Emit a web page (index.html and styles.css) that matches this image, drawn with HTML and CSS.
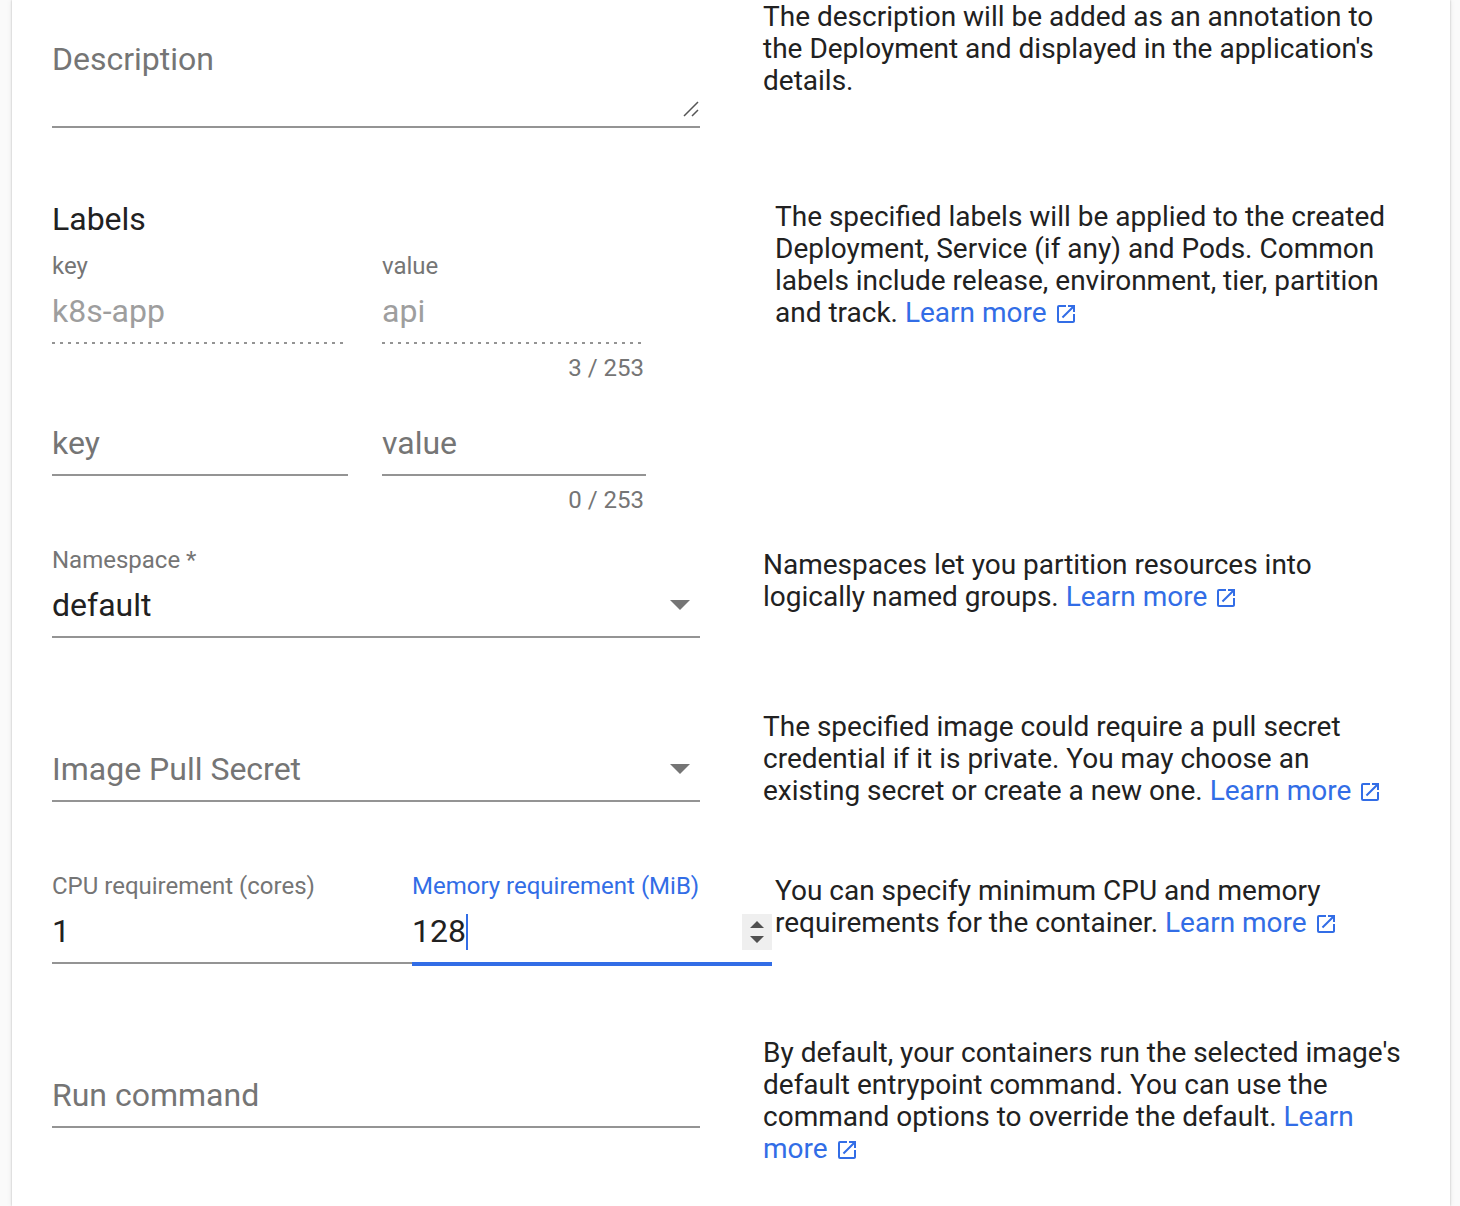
FILE: index.html
```html
<!DOCTYPE html>
<html lang="en">
<head>
<meta charset="utf-8">
<meta name="viewport" content="width=device-width, initial-scale=1">
<title>Create from form</title>
<link rel="stylesheet" href="styles.css">
</head>
<body>
<svg class="sprite" aria-hidden="true">
  <symbol id="open-in-new" viewBox="0 0 24 24"><path d="M19 19H5V5h7V3H5a2 2 0 0 0-2 2v14a2 2 0 0 0 2 2h14c1.100 0 2-.9 2-2v-7h-2v7zM14 3v2h3.590l-9.830 9.830 1.410 1.410L19 6.410V10h2V3h-7z"/></symbol>
</svg>
<main class="card">
  <form class="form">
    <section class="row">
      <div class="field field-area">
        <label class="resting" for="description">Description</label>
        <textarea class="control" id="description"></textarea>
        <svg class="grip" viewBox="0 0 16 16" aria-hidden="true"><path d="M1 15 15 1M9 15l6-6"/></svg>
      </div>
      <p class="help">The description will be added as an annotation to the Deployment and displayed in the application's details.</p>
    </section>

    <section class="row">
      <div class="labels">
        <h2 class="heading">Labels</h2>
        <div class="pair">
          <div class="field">
            <label for="key-0">key</label>
            <input class="control" id="key-0" value="k8s-app" disabled>
          </div>
          <div class="field">
            <label for="value-0">value</label>
            <input class="control" id="value-0" value="api" disabled>
            <span class="hint">3 / 253</span>
          </div>
        </div>
        <div class="pair">
          <div class="field">
            <label class="resting" for="key-1">key</label>
            <input class="control" id="key-1">
          </div>
          <div class="field">
            <label class="resting" for="value-1">value</label>
            <input class="control" id="value-1">
            <span class="hint">0 / 253</span>
          </div>
        </div>
      </div>
      <p class="help help-inset">The specified labels will be applied to the created Deployment, Service (if any) and Pods. Common labels include release, environment, tier, partition and track. <a href="#labels">Learn more <svg class="icon" aria-hidden="true"><use href="#open-in-new"/></svg></a></p>
    </section>

    <section class="row">
      <div class="field">
        <label for="namespace">Namespace *</label>
        <select class="control" id="namespace" required><option>default</option></select>
        <svg class="arrow" viewBox="0 0 20 10" aria-hidden="true"><path d="M0 0h20L10 10z"/></svg>
      </div>
      <p class="help">Namespaces let you partition resources into logically named groups. <a href="#namespaces">Learn more <svg class="icon" aria-hidden="true"><use href="#open-in-new"/></svg></a></p>
    </section>

    <section class="row">
      <div class="field">
        <label class="resting" for="secret">Image Pull Secret</label>
        <select class="control" id="secret"><option value=""></option></select>
        <svg class="arrow" viewBox="0 0 20 10" aria-hidden="true"><path d="M0 0h20L10 10z"/></svg>
      </div>
      <p class="help">The specified image could require a pull secret credential if it is private. You may choose an existing secret or create a new one. <a href="#secrets">Learn more <svg class="icon" aria-hidden="true"><use href="#open-in-new"/></svg></a></p>
    </section>

    <section class="row row-wide">
      <div class="resources">
        <div class="field">
          <label for="cpu">CPU requirement (cores)</label>
          <input class="control" id="cpu" type="number" value="1">
        </div>
        <div class="field active">
          <label for="memory">Memory requirement (MiB)</label>
          <input class="control" id="memory" type="number" value="128">
          <span class="caret"></span>
          <svg class="spinner" viewBox="0 0 30 36" aria-hidden="true"><path d="M8 14 15 7l7 7zM8 22l7 7 7-7z"/></svg>
        </div>
      </div>
      <p class="help">You can specify minimum CPU and memory requirements for the container. <a href="#resources">Learn more <svg class="icon" aria-hidden="true"><use href="#open-in-new"/></svg></a></p>
    </section>

    <section class="row">
      <div class="field">
        <label class="resting" for="command">Run command</label>
        <input class="control" id="command">
      </div>
      <p class="help">By default, your containers run the selected image's default entrypoint command. You can use the command options to override the default. <a href="#command">Learn more <svg class="icon" aria-hidden="true"><use href="#open-in-new"/></svg></a></p>
    </section>
  </form>
</main>
</body>
</html>
```
FILE: styles.css
```css
* {
  box-sizing: border-box;
}

body {
  margin: 0;
  background: #fafafa;
  color: #212121;
  font-family: Roboto, sans-serif;
  font-size: 28px;
  line-height: 32px;
}

.sprite {
  display: none;
}

.card {
  min-height: 100vh;
  margin: 0 10px 0 12px;
  padding: 0 40px;
  background: #fff;
  box-shadow: 0 0 2px rgba(0, 0, 0, 0.24), 0 0 6px rgba(0, 0, 0, 0.08);
}

.form {
  display: flex;
  flex-direction: column;
  gap: 32px;
}

.row {
  display: grid;
  grid-template-columns: minmax(0, 648fr) minmax(0, 647fr);
  column-gap: 63px;
  align-items: start;
}

.row:nth-child(odd) {
  padding-bottom: 2px;
}

.row-wide {
  grid-template-columns: minmax(0, 720fr) minmax(0, 635fr);
  column-gap: 3px;
}

.help {
  margin: 0;
  padding-top: 1px;
}

.row:nth-child(odd):not(:first-child) .help {
  padding-top: 3px;
}

.help-inset {
  padding-left: 12px;
}

a {
  color: #326de6;
  text-decoration: none;
}

.icon {
  width: 24px;
  height: 24px;
  fill: currentColor;
  vertical-align: -4px;
}

/* Field: floating label, control, hint */
.field {
  display: grid;
  grid-template-rows: 28px auto 24px;
  grid-template-columns: minmax(0, 1fr);
  row-gap: 14px;
}

.field > * {
  grid-column: 1;
  grid-row: 2;
}

.field > label {
  grid-row: 1;
  color: #757575;
  font-size: 24px;
  line-height: 28px;
}

.field > .resting {
  grid-row: 2;
  font-size: 32px;
  line-height: 34px;
  z-index: 1;
  pointer-events: none;
}

.control {
  display: block;
  width: 100%;
  height: 50px;
  margin: 0;
  padding: 0 0 14px;
  border: 0;
  border-bottom: 2px solid #949494;
  border-radius: 0;
  outline: 0;
  background: transparent;
  color: #212121;
  font: 32px/34px Roboto, sans-serif;
  appearance: none;
}

.control[type="number"] {
  appearance: textfield;
}

.control:disabled {
  border-bottom-color: transparent;
  background: repeating-linear-gradient(to right, #949494 0 3px, transparent 3px 8px) left bottom / 100% 2px no-repeat border-box;
  color: #9e9e9e;
  opacity: 1;
}

.field-area .control {
  height: 86px;
  resize: none;
}

.grip {
  align-self: end;
  justify-self: end;
  width: 16px;
  height: 16px;
  margin: 0 1px 11px 0;
  fill: none;
  stroke: #555;
  stroke-width: 1.500;
}

.arrow {
  justify-self: end;
  width: 20px;
  height: 10px;
  margin: 12px 10px 0 0;
  fill: #757575;
  pointer-events: none;
}

.field > .hint {
  grid-row: 3;
  justify-self: end;
  padding-right: 2px;
  margin-top: -4px;
  color: #757575;
  font-size: 24px;
  line-height: 28px;
}

.labels {
  padding-right: 54px;
}

.heading {
  margin: 0 0 14px;
  font-size: 32px;
  font-weight: 400;
  line-height: 38px;
}

.pair {
  display: grid;
  grid-template-columns: 296fr 264fr;
  column-gap: 34px;
}

.pair + .pair {
  margin-top: 2px;
}

.resources {
  display: grid;
  grid-template-columns: 1fr 1fr;
}

.active > label {
  color: #326de6;
}

.active .control {
  height: 52px;
  border-bottom: 4px solid #326de6;
  margin-bottom: -2px;
}

.caret {
  width: 2px;
  height: 36px;
  margin-left: 54px;
  background: #326de6;
}

.spinner {
  justify-self: end;
  width: 30px;
  height: 36px;
  background: #efefef;
  fill: #505050;
}
```
